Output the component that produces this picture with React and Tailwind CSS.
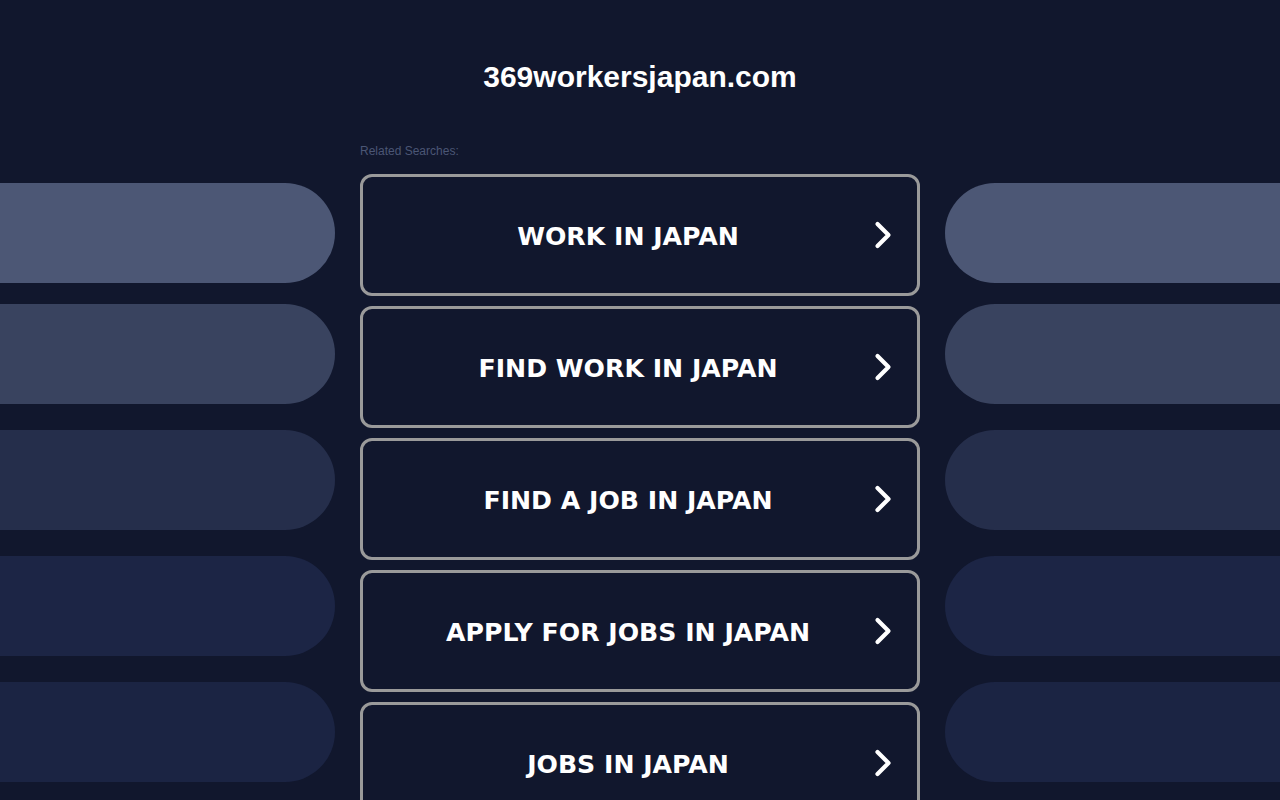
import React from "react";

const searches = [
  "WORK IN JAPAN",
  "FIND WORK IN JAPAN",
  "FIND A JOB IN JAPAN",
  "APPLY FOR JOBS IN JAPAN",
  "JOBS IN JAPAN",
];

// decorative side pills, brightest on top
const pills = [
  { bg: "bg-[#4c5775]", mt: "mt-0" },
  { bg: "bg-[#39435f]", mt: "mt-[21px]" },
  { bg: "bg-[#252e4b]", mt: "mt-[26px]" },
  { bg: "bg-[#1c2545]", mt: "mt-[26px]" },
  { bg: "bg-[#1b2443]", mt: "mt-[26px]" },
];

const Chevron = () => (
  <svg width="20" height="28" viewBox="0 0 20 28" className="shrink-0">
    <polyline
      points="4.5,3 15.5,14 4.5,25"
      fill="none"
      stroke="#ffffff"
      strokeWidth="4.2"
      strokeLinecap="round"
      strokeLinejoin="round"
    />
  </svg>
);

const SidePills = ({ side }) => (
  <div className="flex flex-col pt-[183px]">
    {pills.map((p, i) => (
      <div
        key={i}
        className={`h-[100px] ${p.bg} ${p.mt} ${side === "left" ? "rounded-r-[50px]" : "rounded-l-[50px]"}`}
      />
    ))}
  </div>
);

export default function App() {
  return (
    <div className="min-h-[800px] h-[800px] overflow-hidden bg-[#11172d]">
      <div className="grid grid-cols-[335px_560px_335px] gap-x-[25px]">
        <SidePills side="left" />

        <div className="flex flex-col">
          <h1 className="pt-[59px] h-[144px] text-center text-[30px] leading-[36px] font-bold text-white font-['Liberation_Sans',Arial,sans-serif]">
            369workersjapan.com
          </h1>
          <p className="text-[12px] leading-[14px] text-[#4b5675] font-['Liberation_Sans',Arial,sans-serif]">
            Related Searches:
          </p>
          <div className="mt-[16px] flex flex-col gap-[10px]">
            {searches.map((s) => (
              <a
                key={s}
                href="#"
                className="flex h-[122px] shrink-0 items-center rounded-[12px] border-[3px] border-[#9a9a9a] bg-[#11172d] pl-[20px] pr-[24px]"
              >
                <span className="flex-1 pt-[4px] text-center text-[25.2px] font-bold text-white font-['DejaVu_Sans',Verdana,sans-serif]">
                  {s}
                </span>
                <Chevron />
              </a>
            ))}
          </div>
        </div>

        <SidePills side="right" />
      </div>
    </div>
  );
}
